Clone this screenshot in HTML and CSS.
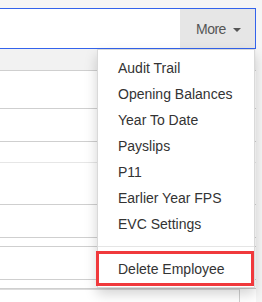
FILE: index.html
```html
<!DOCTYPE html>
<html lang="en">
<head>
    <meta charset="UTF-8">
    <meta name="viewport" content="width=device-width, initial-scale=1.0">
    <title>Employee</title>
    <link rel="stylesheet" href="styles.css">
</head>
<body>
    <div class="page">
        <div class="toolbar">
            <div class="toolbar-fill"></div>
            <div class="more-wrap">
                <button class="more-btn">More <span class="caret"></span></button>
                <ul class="dropdown-menu">
                    <li><a href="#">Audit Trail</a></li>
                    <li><a href="#">Opening Balances</a></li>
                    <li><a href="#">Year To Date</a></li>
                    <li><a href="#">Payslips</a></li>
                    <li><a href="#">P11</a></li>
                    <li><a href="#">Earlier Year FPS</a></li>
                    <li><a href="#">EVC Settings</a></li>
                    <li class="divider"></li>
                    <li class="highlight"><a href="#">Delete Employee</a></li>
                </ul>
            </div>
        </div>

        <div class="grid">
            <div class="grid-head"></div>
            <div class="row" style="height: 38px"></div>
            <div class="row" style="height: 33px"></div>
            <div class="row light" style="height: 21px"></div>
            <div class="row" style="height: 42px"></div>
            <div class="row" style="height: 33px"></div>
            <div class="row" style="height: 9px"></div>
            <div class="row" style="height: 33px"></div>
            <div class="row" style="height: 9px"></div>
            <div class="panel"></div>
        </div>
    </div>
</body>
</html>
```

FILE: styles.css
```css
body {
    margin: 0;
    background-color: #f5f5f5;
    font-family: "Liberation Sans", Arial, sans-serif;
    font-size: 14px;
    color: #333;
    overflow: hidden;
}
.page {
    width: 256px;
    padding-top: 8px;
}
.toolbar {
    display: flex;
    height: 39px;
    border: 1px solid #3363ec;
    border-left: none;
    background-color: #fff;
}
.toolbar-fill {
    flex: 1;
}
.more-wrap {
    position: relative;
}
.more-btn {
    height: 39px;
    width: 75px;
    padding: 0 0 0 16px;
    text-align: left;
    border: none;
    background-color: #e6e6e6;
    font-family: "Liberation Sans", Arial, sans-serif;
    font-size: 14px;
    letter-spacing: -0.5px;
    color: #555;
}
.caret {
    display: inline-block;
    width: 0;
    height: 0;
    margin-left: 4px;
    vertical-align: middle;
    border-top: 4px solid #555;
    border-left: 4px solid transparent;
    border-right: 4px solid transparent;
}
.dropdown-menu {
    position: absolute;
    top: 40px;
    right: 0;
    z-index: 10;
    width: 156px;
    margin: 0;
    padding: 5px 0;
    list-style: none;
    background-color: #fff;
    border: 1px solid rgba(0, 0, 0, 0.15);
    box-shadow: 0 6px 12px rgba(0, 0, 0, 0.175);
}
.dropdown-menu li {
    position: relative;
}
.dropdown-menu a {
    display: block;
    padding: 3px 20px;
    line-height: 20px;
    color: #333;
    text-decoration: none;
    white-space: nowrap;
}
.dropdown-menu .divider {
    height: 1px;
    margin: 9px 0;
    background-color: #e5e5e5;
}
.highlight::after {
    content: "";
    position: absolute;
    top: -5px;
    bottom: -4px;
    left: -2px;
    right: 0;
    border: 3px solid #f0393c;
}
.grid {
    background-color: #fff;
}
.grid-head {
    height: 21px;
    background-color: #f2f2f2;
    border-bottom: 1px solid #cfcfcf;
}
.row {
    border-bottom: 1px solid #cfcfcf;
    box-sizing: border-box;
}
.row.light {
    border-bottom-color: #e6e6e6;
}
.panel {
    width: 240px;
    height: 20px;
    border-right: 1px solid #cfcfcf;
    border-top: 1px solid #dcdcdc;
    box-sizing: border-box;
}
```
